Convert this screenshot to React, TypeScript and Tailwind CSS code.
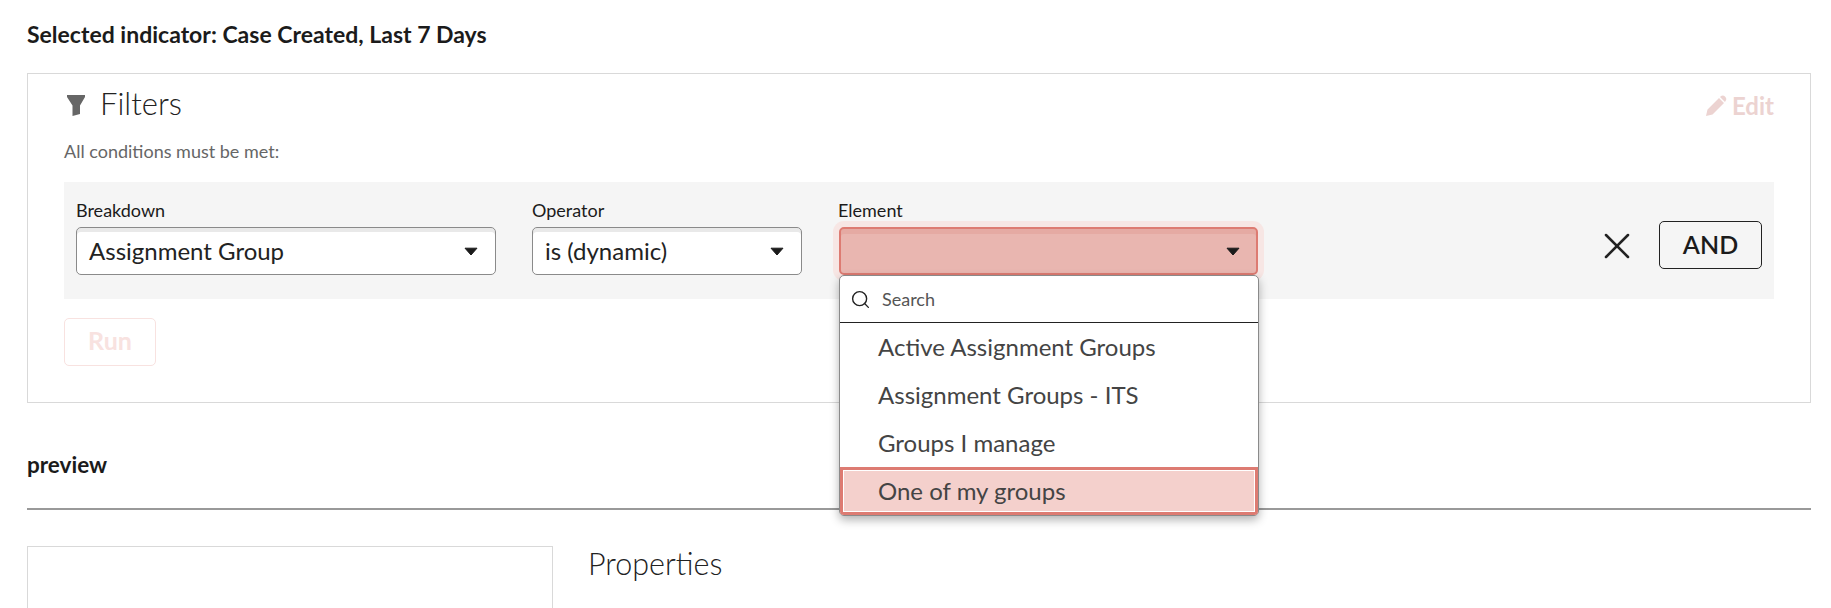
import { Search, X } from 'lucide-react';

function Caret() {
    return (
        <svg width="14" height="9" viewBox="0 0 14 9" className="shrink-0">
            <path d="M1 1.2h12L7 8z" fill="#1b1b1b" stroke="#1b1b1b" strokeLinejoin="round" />
        </svg>
    );
}

function SelectBox({ value, width }: { value: string; width: string }) {
    return (
        <div className={`${width} h-12 flex items-center justify-between pl-3 pr-[17px] bg-white border border-[#8a8a8a] rounded-[5px] shadow-[inset_0_4px_0_#e9e9e9] text-[24px] text-[#222]`}>
            <span>{value}</span>
            <Caret />
        </div>
    );
}

const options = ['Active Assignment Groups', 'Assignment Groups - ITS', 'Groups I manage'];

export default function App() {
    return (
        <div className="h-[608px] overflow-hidden bg-white pl-[27px] pr-5 font-['Lato',sans-serif] text-[#1b1b1b]">
            <h2 className="h-[73px] pt-[20px] text-[23px] leading-7 font-bold">Selected indicator: Case Created, Last 7 Days</h2>

            <section className="h-[330px] border border-[#d9d9d9] pl-9 pr-9">
                <div className="flex h-[63px] items-center justify-between">
                    <div className="flex items-center pl-[3px]">
                        <svg width="18" height="21" viewBox="0 0 18 21">
                            <path d="M0 0h18v2L13 10.5V19l-7.5 2V10.5L0 2z" fill="#666" />
                        </svg>
                        <span className="ml-[15px] -mt-1 text-[31px] font-light text-[#222]">Filters</span>
                    </div>
                    <div className="flex items-center gap-[5px] text-[24px] font-bold text-[#ecd3d1]">
                        <svg width="21" height="21" viewBox="0 0 21 21">
                            <path d="M0 21l1.5-6.5L13 3l5 5L6.5 19.5zM14.5 1.5C16 0 17.5 0 19 1.5s1.8 3 .5 4.5L19 7l-5-5z" fill="#ecd3d1" />
                        </svg>
                        Edit
                    </div>
                </div>
                <p className="h-[45px] pt-[2px] text-[18px] leading-6 text-[#666]">All conditions must be met:</p>

                <div className="flex h-[117px] items-start bg-[#f5f5f5] pl-3 pr-[11px] pt-[18px]">
                    <div>
                        <label className="block h-[27px] text-[18px] leading-[21px]">Breakdown</label>
                        <SelectBox value="Assignment Group" width="w-[420px]" />
                    </div>
                    <div className="ml-9">
                        <label className="block h-[27px] text-[18px] leading-[21px]">Operator</label>
                        <SelectBox value="is (dynamic)" width="w-[270px]" />
                    </div>
                    <div className="relative ml-[37px]">
                        <label className="block h-[27px] -ml-px text-[18px] leading-[21px]">Element</label>
                        <div className="flex h-12 w-[419px] items-center justify-end rounded-[5px] border-2 border-[#dd7b72] bg-[#e9b6b0] pr-4 shadow-[inset_0_5px_0_#e5aaa3,0_0_0_6px_#f7e6e4]">
                            <Caret />
                        </div>
                        <div className="absolute left-0 top-[75px] z-10 w-[420px] overflow-hidden rounded-[5px] border border-[#8a8a8a] bg-white shadow-[0_4px_10px_rgba(0,0,0,0.3)]">
                            <div className="flex h-[47px] items-center border-b border-[#222] pl-[10px] text-[18px] text-[#555]">
                                <Search size={21} strokeWidth={1.6} className="text-[#222]" />
                                <span className="ml-[11px]">Search</span>
                            </div>
                            {options.map((o) => (
                                <div key={o} className="flex h-12 items-center pl-[38px] text-[24px] text-[#444]">
                                    {o}
                                </div>
                            ))}
                            <div className="flex h-12 items-center border-[3px] border-[#dd7b72] bg-[#f4d0cc] pl-[35px] text-[24px] text-[#444] shadow-[inset_0_0_0_1px_#fff]">
                                One of my groups
                            </div>
                        </div>
                    </div>
                    <div className="ml-auto flex items-start pt-[21px]">
                        <X size={44} strokeWidth={1.4} className="mt-[3px] text-[#222]" />
                        <button className="ml-[20px] mr-px h-12 w-[103px] rounded-[5px] border border-[#222] text-[25px] font-semibold">AND</button>
                    </div>
                </div>

                <button className="mt-[19px] h-12 w-[92px] rounded-[5px] border border-[#f8e2e0] pb-0.5 text-[25px] font-bold text-[#f8e2e0]">Run</button>
            </section>

            <div className="flex h-[107px] items-start border-b-2 border-[#999] pt-[48px]">
                <h3 className="text-[22.5px] leading-7 font-bold">preview</h3>
            </div>

            <div className="flex pt-[36px]">
                <div className="h-[200px] w-[526px] border border-[#d9d9d9]" />
                <h3 className="ml-[35px] -mt-px text-[30.5px] leading-9 font-light text-[#222]">Properties</h3>
            </div>
        </div>
    );
}
